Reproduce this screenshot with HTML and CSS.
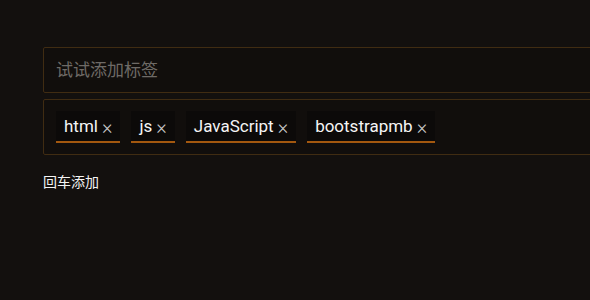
FILE: index.html
```html
<!DOCTYPE html>
<html>
<head>
  <link rel="stylesheet" href="styles.css">
</head>
<body>
  <div class="container">
    <input type="text" class="tag-input" placeholder="试试添加标签">
    <div class="tag-list">
      <span class="tag">html<span class="close">×</span></span>
      <span class="tag">js<span class="close">×</span></span>
      <span class="tag">JavaScript<span class="close">×</span></span>
      <span class="tag">bootstrapmb<span class="close">×</span></span>
    </div>
    <div class="hint">回车添加</div>
  </div>
</body>
</html>
```

FILE: styles.css
```css
body {
  background-color: #13100e;
  font-family: Roboto, "Noto Sans CJK SC", sans-serif;
  margin: 0;
  padding: 47px 0 0 43px;
  overflow: hidden;
}

.container {
  width: 620px;
}

.tag-input {
  display: block;
  width: 100%;
  height: 46px;
  box-sizing: border-box;
  background-color: #110e0c;
  border: 1px solid #402c12;
  border-radius: 2px;
  padding: 0 12px;
  font-size: 17px;
  font-family: Roboto, "Noto Sans CJK SC", sans-serif;
  color: #ddd;
  outline: none;
}

.tag-input::placeholder {
  color: #6e6a66;
}

.tag-list {
  display: flex;
  gap: 11px;
  margin-top: 6px;
  padding: 11px 12px;
  border: 1px solid #402c12;
  border-radius: 2px;
  background-color: #110e0c;
}

.tag {
  display: inline-flex;
  align-items: center;
  height: 30px;
  padding: 0 8px 0 8px;
  background-color: #0c0a09;
  border-bottom: 2px solid #a3580f;
  color: #f5f5f5;
  font-size: 17px;
}

.close {
  margin-left: 4px;
  margin-top: 2px;
  color: #c8c8c8;
  font-size: 20px;
  font-weight: 300;
  line-height: 1;
}

.hint {
  margin-top: 16px;
  color: #f4f4f4;
  font-size: 14px;
}
```
